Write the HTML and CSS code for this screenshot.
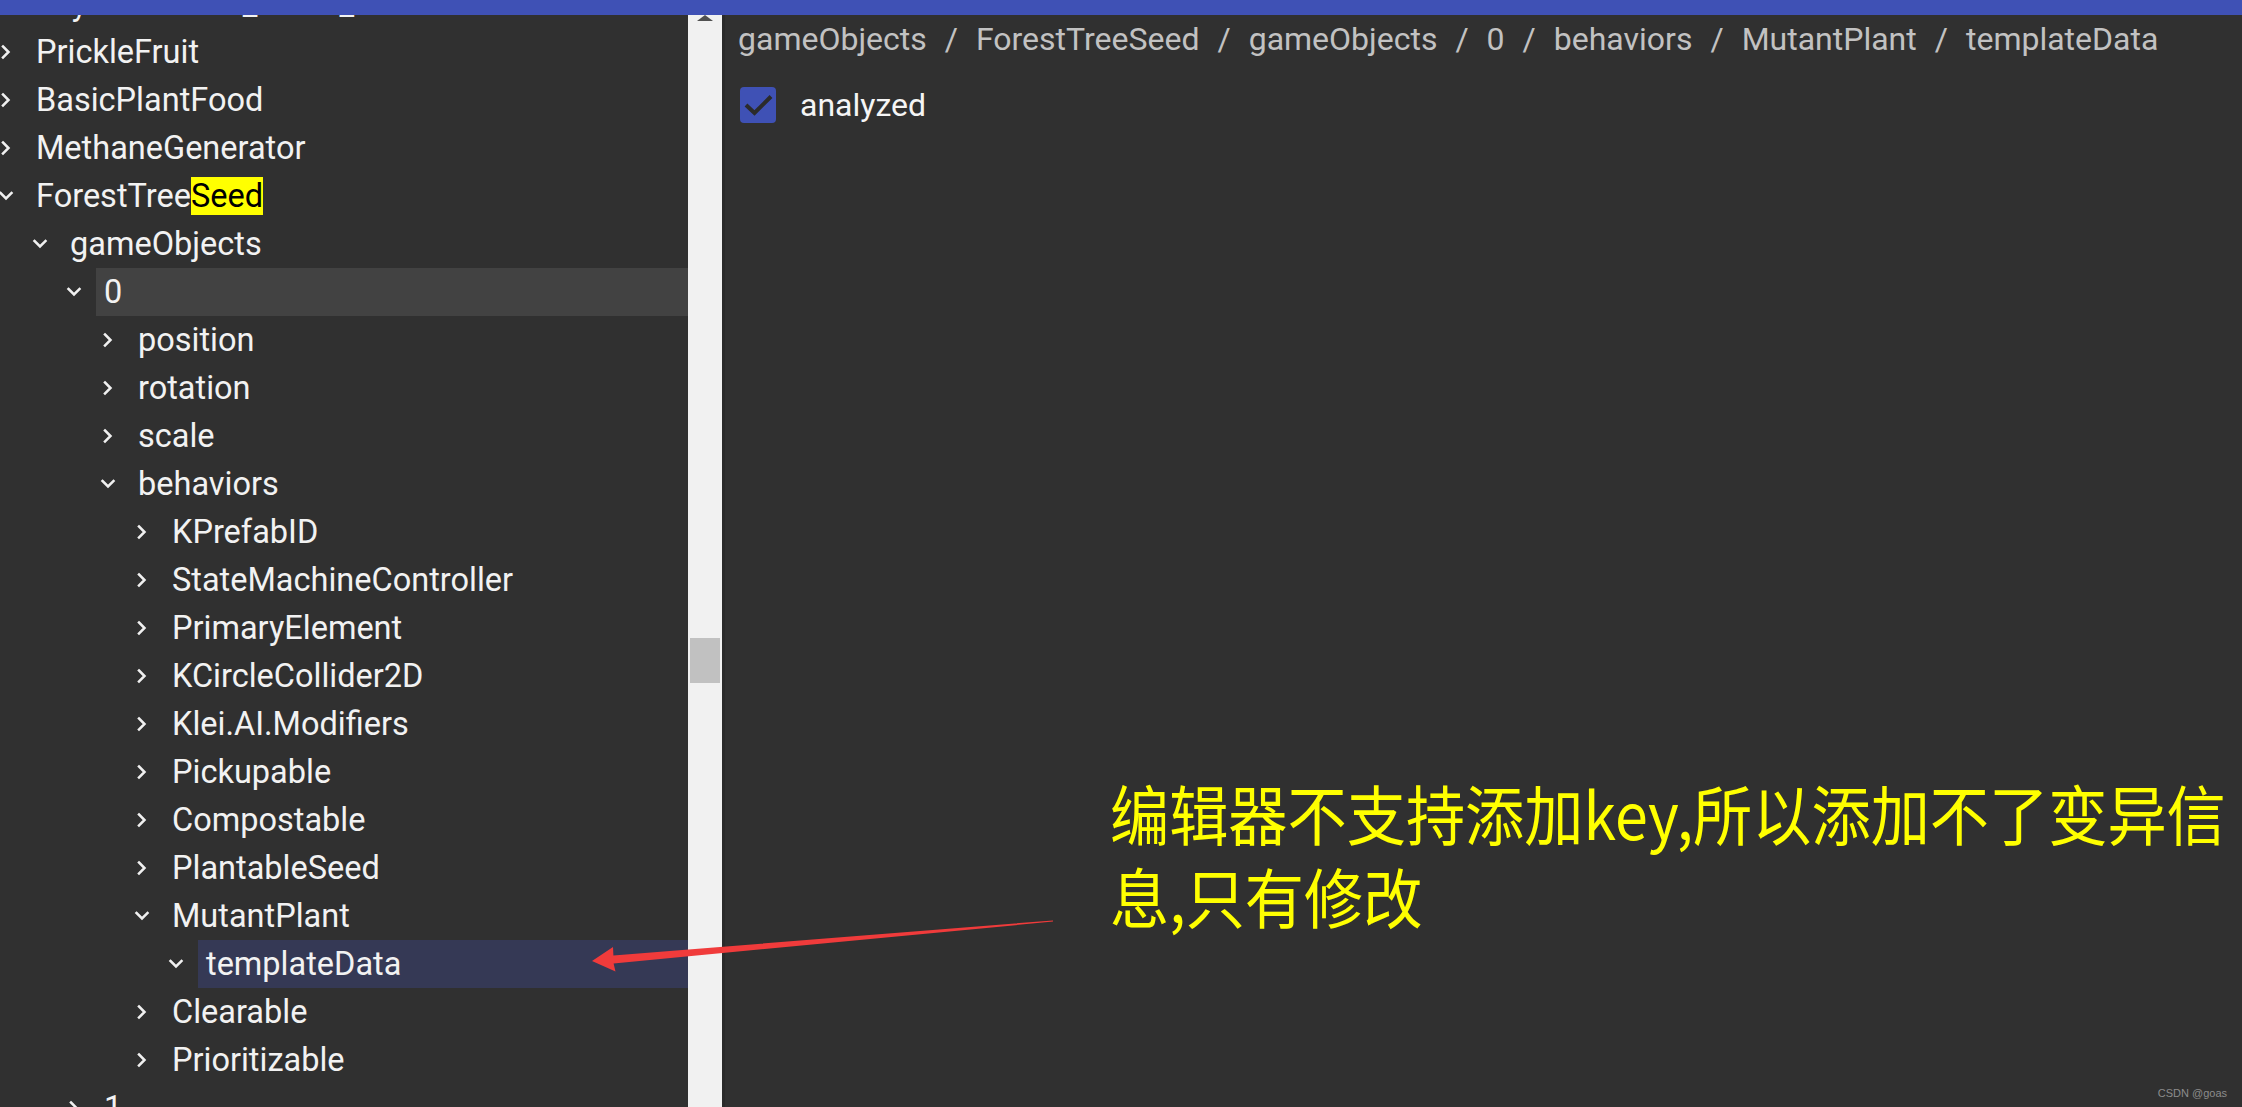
FILE: index.html
```html
<!DOCTYPE html>
<html>
<head>
<meta charset="utf-8">
<link rel="stylesheet" href="styles.css">
</head>
<body>
<div class="app">
  <header class="topbar"></header>
  <div class="main">
    <nav class="tree">
      <div class="tree-list">
        <div class="row lv0"><span class="chev"><svg class="ic-r" viewBox="0 0 10 14"><path d="M2 1.5 L7.5 7 L2 12.5"/></svg></span><span class="label">SkyCrashSites_Loots_A</span></div>
        <div class="row lv0"><span class="chev"><svg class="ic-r" viewBox="0 0 10 14"><path d="M2 1.5 L7.5 7 L2 12.5"/></svg></span><span class="label">PrickleFruit</span></div>
        <div class="row lv0"><span class="chev"><svg class="ic-r" viewBox="0 0 10 14"><path d="M2 1.5 L7.5 7 L2 12.5"/></svg></span><span class="label">BasicPlantFood</span></div>
        <div class="row lv0"><span class="chev"><svg class="ic-r" viewBox="0 0 10 14"><path d="M2 1.5 L7.5 7 L2 12.5"/></svg></span><span class="label">MethaneGenerator</span></div>
        <div class="row lv0"><span class="chev"><svg class="ic-d" viewBox="0 0 14 10"><path d="M1.5 2 L7 7.5 L12.5 2"/></svg></span><span class="label">ForestTree<mark class="hit">Seed</mark></span></div>
        <div class="row lv1"><span class="chev"><svg class="ic-d" viewBox="0 0 14 10"><path d="M1.5 2 L7 7.5 L12.5 2"/></svg></span><span class="label">gameObjects</span></div>
        <div class="row lv2"><span class="chev"><svg class="ic-d" viewBox="0 0 14 10"><path d="M1.5 2 L7 7.5 L12.5 2"/></svg></span><span class="label hover">0</span></div>
        <div class="row lv3"><span class="chev"><svg class="ic-r" viewBox="0 0 10 14"><path d="M2 1.5 L7.5 7 L2 12.5"/></svg></span><span class="label">position</span></div>
        <div class="row lv3"><span class="chev"><svg class="ic-r" viewBox="0 0 10 14"><path d="M2 1.5 L7.5 7 L2 12.5"/></svg></span><span class="label">rotation</span></div>
        <div class="row lv3"><span class="chev"><svg class="ic-r" viewBox="0 0 10 14"><path d="M2 1.5 L7.5 7 L2 12.5"/></svg></span><span class="label">scale</span></div>
        <div class="row lv3"><span class="chev"><svg class="ic-d" viewBox="0 0 14 10"><path d="M1.5 2 L7 7.5 L12.5 2"/></svg></span><span class="label">behaviors</span></div>
        <div class="row lv4"><span class="chev"><svg class="ic-r" viewBox="0 0 10 14"><path d="M2 1.5 L7.5 7 L2 12.5"/></svg></span><span class="label">KPrefabID</span></div>
        <div class="row lv4"><span class="chev"><svg class="ic-r" viewBox="0 0 10 14"><path d="M2 1.5 L7.5 7 L2 12.5"/></svg></span><span class="label">StateMachineController</span></div>
        <div class="row lv4"><span class="chev"><svg class="ic-r" viewBox="0 0 10 14"><path d="M2 1.5 L7.5 7 L2 12.5"/></svg></span><span class="label">PrimaryElement</span></div>
        <div class="row lv4"><span class="chev"><svg class="ic-r" viewBox="0 0 10 14"><path d="M2 1.5 L7.5 7 L2 12.5"/></svg></span><span class="label">KCircleCollider2D</span></div>
        <div class="row lv4"><span class="chev"><svg class="ic-r" viewBox="0 0 10 14"><path d="M2 1.5 L7.5 7 L2 12.5"/></svg></span><span class="label">Klei.AI.Modifiers</span></div>
        <div class="row lv4"><span class="chev"><svg class="ic-r" viewBox="0 0 10 14"><path d="M2 1.5 L7.5 7 L2 12.5"/></svg></span><span class="label">Pickupable</span></div>
        <div class="row lv4"><span class="chev"><svg class="ic-r" viewBox="0 0 10 14"><path d="M2 1.5 L7.5 7 L2 12.5"/></svg></span><span class="label">Compostable</span></div>
        <div class="row lv4"><span class="chev"><svg class="ic-r" viewBox="0 0 10 14"><path d="M2 1.5 L7.5 7 L2 12.5"/></svg></span><span class="label">PlantableSeed</span></div>
        <div class="row lv4"><span class="chev"><svg class="ic-d" viewBox="0 0 14 10"><path d="M1.5 2 L7 7.5 L12.5 2"/></svg></span><span class="label">MutantPlant</span></div>
        <div class="row lv5"><span class="chev"><svg class="ic-d" viewBox="0 0 14 10"><path d="M1.5 2 L7 7.5 L12.5 2"/></svg></span><span class="label selected">templateData</span></div>
        <div class="row lv4"><span class="chev"><svg class="ic-r" viewBox="0 0 10 14"><path d="M2 1.5 L7.5 7 L2 12.5"/></svg></span><span class="label">Clearable</span></div>
        <div class="row lv4"><span class="chev"><svg class="ic-r" viewBox="0 0 10 14"><path d="M2 1.5 L7.5 7 L2 12.5"/></svg></span><span class="label">Prioritizable</span></div>
        <div class="row lv2"><span class="chev"><svg class="ic-r" viewBox="0 0 10 14"><path d="M2 1.5 L7.5 7 L2 12.5"/></svg></span><span class="label">1</span></div>
      </div>
    </nav>
    <div class="scrollbar">
      <div class="sb-up"></div>
      <div class="sb-thumb"></div>
    </div>
    <section class="content">
      <div class="crumbs">
        <span>gameObjects</span><span class="sep">/</span><span>ForestTreeSeed</span><span class="sep">/</span><span>gameObjects</span><span class="sep">/</span><span>0</span><span class="sep">/</span><span>behaviors</span><span class="sep">/</span><span>MutantPlant</span><span class="sep">/</span><span>templateData</span>
      </div>
      <label class="field">
        <span class="checkbox"><svg viewBox="0 0 36 36"><path d="M6 18 L14.5 26 L31 9.5"/></svg></span>
        <span class="field-name">analyzed</span>
      </label>
    </section>
  </div>
  <div class="note">编辑器不支持添加key,所以添加不了变异信息,只有修改</div>
  <svg class="arrow" viewBox="0 0 2242 1107">
    <polygon points="592,961 613,947 613.4,955.4 1053,920.4 1053,921.6 613.6,963.4 615.5,971.5"/>
  </svg>
  <div class="watermark">CSDN @goas</div>
</div>
</body>
</html>
```
FILE: styles.css
```css
html, body {
  margin: 0;
  padding: 0;
  height: 100%;
  overflow: hidden;
  background: #303030;
}

.app {
  position: relative;
  width: 2242px;
  height: 1107px;
  display: flex;
  flex-direction: column;
  font-family: Roboto, "Noto Sans", sans-serif;
  color: #f2f2f2;
}

.topbar {
  height: 15px;
  flex: none;
  background: #3f51b5;
}

.main {
  flex: 1;
  display: flex;
  min-height: 0;
}

.tree {
  width: 688px;
  flex: none;
  overflow: hidden;
  background: #303030;
}

.tree-list {
  margin-top: -35px;
}

.row {
  height: 48px;
  display: flex;
  align-items: center;
  font-size: 32.5px;
  white-space: nowrap;
}

.lv0 { padding-left: 0; }
.lv1 { padding-left: 34px; }
.lv2 { padding-left: 68px; }
.lv3 { padding-left: 102px; }
.lv4 { padding-left: 136px; }
.lv5 { padding-left: 170px; }

.chev {
  width: 28px;
  flex: none;
  display: flex;
  align-items: center;
}

.chev svg {
  fill: none;
  stroke: #f0f0f0;
  stroke-width: 2.5;
  stroke-linecap: square;
  overflow: visible;
}

.ic-r {
  width: 10px;
  height: 14px;
  margin-left: 1px;
}

.ic-d {
  width: 14px;
  height: 10px;
  margin-left: -1px;
}

.label {
  flex: 1;
  height: 48px;
  line-height: 48px;
  padding: 0 8px;
}

.label.hover {
  background: #424242;
}

.label.selected {
  background: #353955;
}

.hit {
  background: #ffff00;
  color: #000;
  padding: 0;
}

.scrollbar {
  width: 34px;
  flex: none;
  background: #f1f1f1;
  display: flex;
  flex-direction: column;
  align-items: center;
}

.sb-up {
  width: 0;
  height: 0;
  border-left: 8px solid transparent;
  border-right: 8px solid transparent;
  border-bottom: 6px solid #505050;
}

.sb-thumb {
  width: 30px;
  height: 45px;
  margin-top: 617px;
  background: #c1c1c1;
}

.content {
  flex: 1;
  background: #303030;
  border-left: 3px solid #2a2a2a;
  padding-left: 13px;
}

.crumbs {
  height: 48px;
  line-height: 48px;
  font-size: 32px;
  color: #c2c2c2;
  white-space: nowrap;
}

.sep {
  margin: 0 18px;
}

.field {
  margin-top: 18px;
  height: 48px;
  display: flex;
  align-items: center;
  padding-left: 2px;
  gap: 24px;
  font-size: 32px;
  color: #f5f5f5;
}

.checkbox {
  width: 36px;
  height: 36px;
  border-radius: 4px;
  background: #3f51b5;
  display: flex;
}

.checkbox svg {
  width: 36px;
  height: 36px;
  fill: none;
  stroke: #2b2b2b;
  stroke-width: 4;
}

.note {
  position: absolute;
  left: 1110px;
  top: 771px;
  width: 1126px;
  font-family: "Noto Sans CJK SC", "Noto Sans", sans-serif;
  font-size: 59.2px;
  line-height: 74.5px;
  color: #ffff00;
  transform: scaleY(1.1);
  transform-origin: top left;
}

.arrow {
  position: absolute;
  left: 0;
  top: 0;
  width: 2242px;
  height: 1107px;
  pointer-events: none;
}

.arrow polygon {
  fill: #f03b3b;
}

.watermark {
  position: absolute;
  right: 15px;
  bottom: 8px;
  font-family: "Liberation Sans", sans-serif;
  font-size: 11px;
  color: #8c8c8c;
}
```
